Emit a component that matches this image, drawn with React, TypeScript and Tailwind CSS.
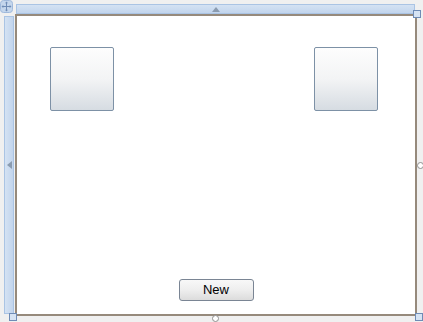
import React from "react";

function MoveGlyph() {
  return (
    <svg width="13" height="13" viewBox="0 0 13 13" className="block">
      <rect x="0.5" y="0.5" width="12" height="12" rx="3" fill="#c4d6ec" stroke="#9fb9dc" />
      <path d="M6.5 2.5v8M2.5 6.5h8" stroke="#6f8cb6" strokeWidth="1" />
      <path d="M6.5 1.5l-1.5 1.8h3zM6.5 11.5l-1.5-1.8h3zM1.5 6.5l1.8-1.5v3zM11.5 6.5l-1.8-1.5v3z" fill="#6f8cb6" />
    </svg>
  );
}

function Box() {
  return (
    <div className="h-[64px] w-[64px] rounded-[2px] border border-[#7d91a6] bg-gradient-to-b from-[#fdfdfd] via-[#f3f4f5] to-[#d6dce2]" />
  );
}

export default function App() {
  return (
    <div
      className="relative h-[322px] w-[423px] overflow-hidden bg-[#f0f0f0] pl-[4px] pt-[4px]"
      style={{ fontFamily: '"Liberation Sans", Arial, sans-serif' }}
    >
      {/* move glyph */}
      <div className="absolute left-0 top-0">
        <MoveGlyph />
      </div>

      <div className="grid grid-cols-[11px_402px] grid-rows-[10px_302px]">
        <div />
        {/* top rail */}
        <div className="ml-[1px] flex h-[10px] w-[399px] items-center justify-center border border-[#aac4e4] bg-gradient-to-b from-[#d4e2f3] to-[#c2d5ed]">
          <div className="h-0 w-0 border-x-[4px] border-b-[5px] border-x-transparent border-b-[#8a9bb0]" />
        </div>

        {/* left rail */}
        <div className="mt-[2px] flex h-[298px] w-[10px] items-center justify-center border border-[#aac4e4] bg-gradient-to-r from-[#d4e2f3] to-[#c2d5ed]">
          <div className="h-0 w-0 border-y-[4px] border-r-[5px] border-y-transparent border-r-[#8a9bb0]" />
        </div>

        {/* form */}
        <div className="flex flex-col border-2 border-[#968a7c] bg-white">
          <div className="flex justify-between pl-[33px] pr-[37px] pt-[31px]">
            <Box />
            <Box />
          </div>
          <div className="mt-auto flex justify-center pb-[13px]">
            <div className="flex h-[22px] w-[75px] items-center justify-center rounded-[3px] border border-[#7a8594] bg-gradient-to-b from-[#f8f8f8] via-[#eeeeee] to-[#dcdcdc] text-[13px] text-black">
              New
            </div>
          </div>
        </div>
      </div>

      {/* selection handles */}
      <div className="absolute left-[413px] top-[10px] h-[8px] w-[8px] border border-[#6f8cb6] bg-[#d6e3f3]" />
      <div className="absolute left-[9px] top-[313px] h-[8px] w-[8px] border border-[#6f8cb6] bg-[#d6e3f3]" />
      <div className="absolute left-[415px] top-[313px] h-[8px] w-[8px] border border-[#6f8cb6] bg-[#d6e3f3]" />
      <div className="absolute left-[417px] top-[162px] h-[7px] w-[7px] rounded-full border border-[#909090] bg-white" />
      <div className="absolute left-[212px] top-[315px] h-[7px] w-[7px] rounded-full border border-[#909090] bg-white" />
    </div>
  );
}
